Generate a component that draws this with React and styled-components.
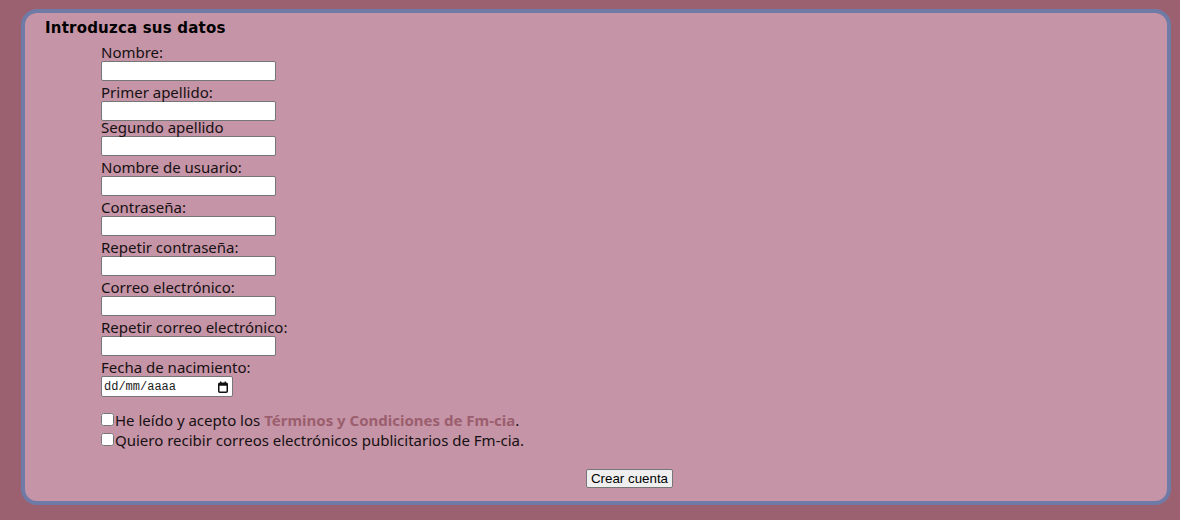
import React from "react";
import styled, { createGlobalStyle } from "styled-components";

const GlobalStyle = createGlobalStyle`
  html, body {
    margin: 0;
    padding: 0;
    background: #9b6170;
  }
  body {
    font-family: "Noto Sans", "DejaVu Sans", sans-serif;
    color: #161012;
  }
`;

const Page = styled.div`
  padding: 9px 9px 15px 21px;
  height: 520px;
  box-sizing: border-box;
`;

const Panel = styled.section`
  height: 100%;
  box-sizing: border-box;
  border: 4px solid #6f7ba6;
  border-radius: 16px;
  background: #c594a6;
  padding: 5px 9px 0 20px;
`;

const Title = styled.h2`
  margin: 0;
  font-family: "DejaVu Sans", Verdana, sans-serif;
  font-weight: bold;
  font-size: 15px;
  line-height: 20px;
  letter-spacing: 0.2px;
  color: #000;
`;

const Form = styled.form`
  margin: 3px 0 0 56px;
  font-size: 15px;
`;

const Label = styled.label`
  display: block;
  height: ${(p) => (p.$tight ? "15px" : "20px")};
  line-height: ${(p) => (p.$tight ? "13px" : "23px")};
  white-space: nowrap;
`;

const TextInput = styled.input`
  display: block;
  box-sizing: border-box;
  width: 175px;
  height: 20px;
  margin: 0;
  padding: 1px 2px;
  border: 1px solid #767676;
  border-radius: 2px;
  background: #fff;
  font-size: 13px;
`;

const DateBox = styled.div`
  display: flex;
  align-items: center;
  box-sizing: border-box;
  width: 132px;
  height: 21px;
  border: 1px solid #767676;
  border-radius: 2px;
  background: #fff;
  padding: 0 4px 0 2px;
`;

const DateText = styled.input`
  flex: 1;
  min-width: 0;
  border: none;
  outline: none;
  padding: 0;
  margin: 0;
  background: transparent;
  font-family: "Liberation Mono", "DejaVu Sans Mono", monospace;
  font-size: 12px;
  &::placeholder {
    color: #1b1b1b;
    opacity: 1;
  }
`;

const Checks = styled.div`
  margin-top: 13px;
`;

const CheckLine = styled.label`
  display: block;
  line-height: 20px;
  white-space: nowrap;
`;

const Check = styled.input`
  margin: 0 1px 0 0;
  width: 13px;
  height: 13px;
  vertical-align: baseline;
`;

const TermsLink = styled.a`
  color: #9b5e6e;
  font-weight: bold;
  text-decoration: none;
`;

const Actions = styled.div`
  display: flex;
  justify-content: center;
  margin-top: 19px;
`;

const SubmitButton = styled.button`
  font-family: "Liberation Sans", Arial, sans-serif;
  font-size: 13.33px;
  height: 19px;
  line-height: 15px;
  padding: 0 4px;
  border: 1px solid #767676;
  border-radius: 2px;
  background: #efefef;
  color: #000;
`;

const CalendarIcon = () => (
  <svg width="10" height="12" viewBox="0 0 10 12" aria-hidden="true">
    <rect x="0.75" y="2.25" width="8.5" height="9" rx="1" fill="none" stroke="#111" strokeWidth="1.5" />
    <rect x="0.75" y="2.25" width="8.5" height="2.5" fill="#111" />
    <rect x="2" y="0.5" width="1.4" height="2.5" fill="#111" />
    <rect x="6.6" y="0.5" width="1.4" height="2.5" fill="#111" />
  </svg>
);

const fields = [
  { id: "nombre", label: "Nombre:" },
  { id: "apellido1", label: "Primer apellido:" },
  { id: "apellido2", label: "Segundo apellido", tight: true },
  { id: "usuario", label: "Nombre de usuario:" },
  { id: "pass", label: "Contraseña:", type: "password" },
  { id: "pass2", label: "Repetir contraseña:", type: "password" },
  { id: "email", label: "Correo electrónico:", type: "email" },
  { id: "email2", label: "Repetir correo electrónico:", type: "email" },
];

export default function App() {
  return (
    <Page>
      <GlobalStyle />
      <Panel>
        <Title>Introduzca sus datos</Title>
        <Form onSubmit={(e) => e.preventDefault()}>
          {fields.map((f) => (
            <div key={f.id}>
              <Label htmlFor={f.id} $tight={f.tight}>
                {f.label}
              </Label>
              <TextInput id={f.id} type={f.type || "text"} />
            </div>
          ))}
          <Label htmlFor="nacimiento">Fecha de nacimiento:</Label>
          <DateBox>
            <DateText id="nacimiento" placeholder="dd/mm/aaaa" />
            <CalendarIcon />
          </DateBox>
          <Checks>
            <CheckLine>
              <Check type="checkbox" />
              He leído y acepto los{" "}
              <TermsLink href="#terminos">Términos y Condiciones de Fm-cia</TermsLink>.
            </CheckLine>
            <CheckLine>
              <Check type="checkbox" />
              Quiero recibir correos electrónicos publicitarios de Fm-cia.
            </CheckLine>
          </Checks>
          <Actions>
            <SubmitButton type="submit">Crear cuenta</SubmitButton>
          </Actions>
        </Form>
      </Panel>
    </Page>
  );
}
